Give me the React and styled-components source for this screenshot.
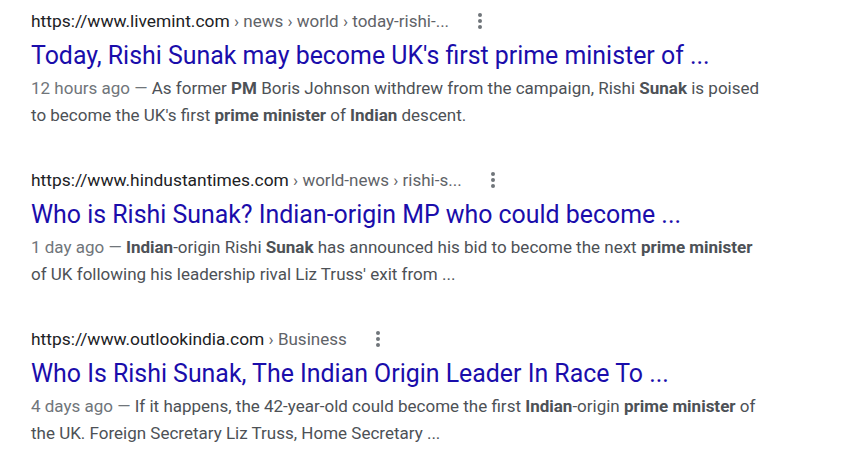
import React from 'react'
import styled, { createGlobalStyle } from 'styled-components'

const GlobalStyle = createGlobalStyle`
body {
  margin:0;
  background:#fff;
  font-family: Roboto, "Liberation Sans", Arial, sans-serif;
}
`;
const Page = styled.div`
padding:8px 0 0 31px;
display:flex;
flex-direction:column;
gap:38px;
`;
const Result = styled.div`
display:flex;
flex-direction:column;
width:735px;
`;
const UrlRow = styled.div`
display:flex;
align-items:center;
height:26px;
font-size:17.4px;
color:#202124;
white-space:pre;
`;
const Crumbs = styled.span`
font-size:17px;
color:#5f6368;
`;
const Dots = styled.span`
display:flex;
align-items:center;
margin-left:23px;
color:#70757a;
`;
const Title = styled.a`
display:block;
margin-top:6px;
font-size:24.9px;
line-height:31px;
color:#1a0dab;
text-decoration:none;
`;
const Snippet = styled.div`
margin-top:4px;
font-size:17px;
line-height:27px;
color:#4d5156;
b {
  font-weight:700;
  color:#4d5156;
}
`;
const Date = styled.span`
color:#70757a;
`;

const MoreIcon = () => (
  <svg width="16" height="20" viewBox="0 0 16 20">
    <circle cx="8" cy="4" r="2" fill="currentColor" />
    <circle cx="8" cy="10" r="2" fill="currentColor" />
    <circle cx="8" cy="16" r="2" fill="currentColor" />
  </svg>
);

const results = [
  {
    host: 'https://www.livemint.com',
    crumbs: ' › news › world › today-rishi-...',
    title: "Today, Rishi Sunak may become UK's first prime minister of ...",
    date: '12 hours ago',
    snippet: (
      <>As former <b>PM</b> Boris Johnson withdrew from the campaign, Rishi <b>Sunak</b> is poised to become the UK's first <b>prime minister</b> of <b>Indian</b> descent.</>
    ),
  },
  {
    host: 'https://www.hindustantimes.com',
    crumbs: ' › world-news › rishi-s...',
    title: 'Who is Rishi Sunak? Indian-origin MP who could become ...',
    date: '1 day ago',
    snippet: (
      <><b>Indian</b>-origin Rishi <b>Sunak</b> has announced his bid to become the next <b>prime minister</b> of UK following his leadership rival Liz Truss' exit from ...</>
    ),
  },
  {
    host: 'https://www.outlookindia.com',
    crumbs: ' › Business',
    title: 'Who Is Rishi Sunak, The Indian Origin Leader In Race To ...',
    date: '4 days ago',
    snippet: (
      <>If it happens, the 42-year-old could become the first <b>Indian</b>-origin <b>prime minister</b> of the UK. Foreign Secretary Liz Truss, Home Secretary ...</>
    ),
  },
];

export default function App() {
  return (
    <>
      <GlobalStyle />
      <Page>
        {results.map((r) => (
          <Result key={r.host}>
            <UrlRow>
              <span>{r.host}</span>
              <Crumbs>{r.crumbs}</Crumbs>
              <Dots><MoreIcon /></Dots>
            </UrlRow>
            <Title href="#">{r.title}</Title>
            <Snippet>
              <Date>{r.date} — </Date>
              {r.snippet}
            </Snippet>
          </Result>
        ))}
      </Page>
    </>
  )
}
